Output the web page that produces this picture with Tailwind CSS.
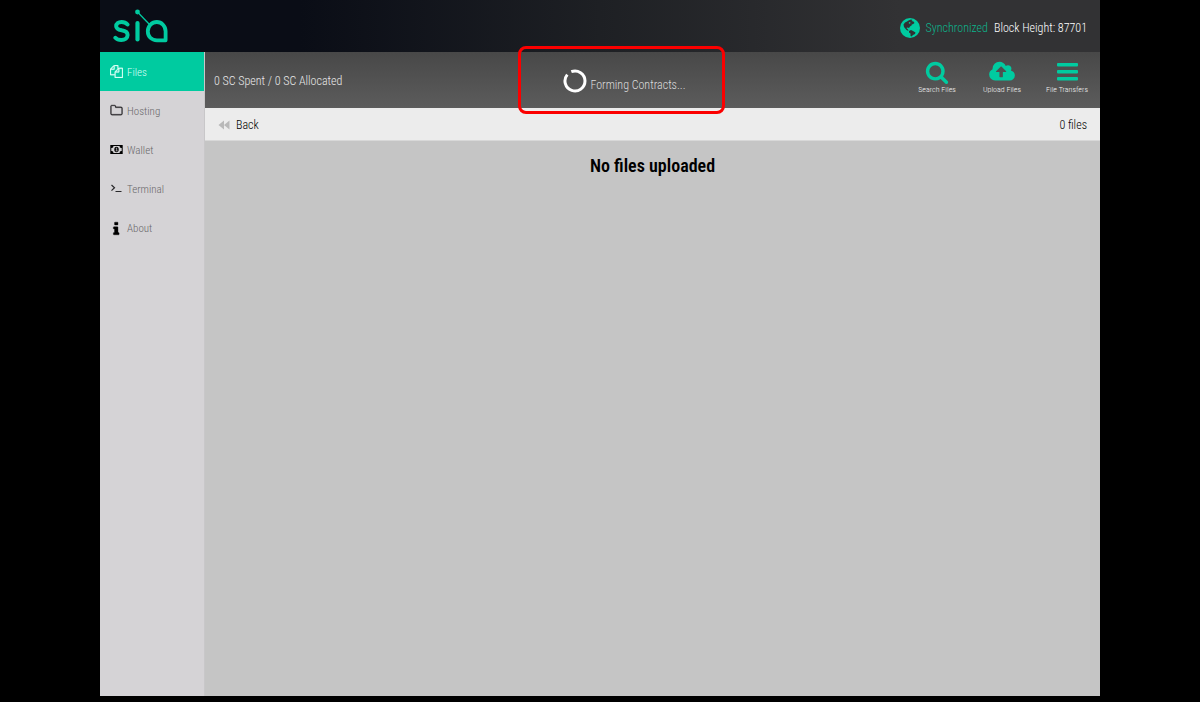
<!DOCTYPE html>
<html lang="en">
<head>
<meta charset="utf-8">
<meta name="viewport" content="width=device-width, initial-scale=1">
<title>Sia</title>
<script src="https://cdn.jsdelivr.net/npm/@tailwindcss/browser@4"></script>
</head>
<body class="flex min-h-screen flex-col bg-black px-[100px] pb-1.5 font-['Roboto_Condensed','Liberation_Sans_Narrow',Roboto,sans-serif] text-xs font-light">
<header class="flex h-[52px] items-center justify-between bg-linear-to-r from-[#0a0d16] from-20% via-[#1e2024] via-50% to-[#323234] to-80% px-[13px]">
  <svg class="mt-0.5 h-9 w-14" viewBox="0 0 56 36" fill="none" stroke="#00cba0" role="img" aria-label="Sia">
    <path d="M14.500 15.500C13 13.800 11 13 8.500 13C5.400 13 3.200 14.700 3.200 17.200C3.200 20 5.800 20.700 8.700 21.300C12 21.900 14.600 22.600 14.600 26C14.600 29 12 31 8.300 31C6 31 3.800 30.400 2.400 28.800" stroke-width="4" stroke-linecap="round"/>
    <path d="M24.500 14V30.500" stroke-width="4.200" stroke-linecap="round"/>
    <circle cx="24.500" cy="3" r="2.400" fill="#00cba0" stroke="none"/>
    <path d="M24.500 3L37 16" stroke-width="1.300"/>
    <path d="M52.600 31.300H44C38.500 31.300 34.800 27.500 34.800 22.300S39 13 43.800 13S52.600 17.200 52.600 22.300Z" stroke-width="3.800" stroke-linejoin="round"/>
  </svg>
  <div class="flex items-center gap-1.5 pt-[3px]">
    <svg class="size-5" viewBox="0 0 20 20" aria-hidden="true">
      <circle cx="10" cy="10" r="10" fill="#00cba0"/>
      <path fill="#303032" d="M8.500 2.500L11 1.500L12.500 2L11.500 3L13.500 3.500L14.500 5L12.500 6.500L11.500 5.500L12 7L10 8.500L9 10L7.500 9.500L6.500 10L8 11.500L8.500 13L6.500 12L4 9L3.500 6.500L5 4.500L7 3.500ZM9.500 4L8.500 5L10 6L10.500 4.500ZM9 13L11 12L13 13L15.500 14.500L15 16L13 17L11.500 18.500L10.500 18L10.500 15.500L9 14.500Z"/>
    </svg>
    <span class="text-[#0cb48c]">Synchronized</span>
    <span class="text-white">Block Height: 87701</span>
  </div>
</header>
<div class="flex grow">
  <nav class="w-[105px] shrink-0 border-r border-[#c8c7c9] bg-[#d5d3d6] text-[11px] text-[#6a686b]">
    <a href="#" aria-current="page" class="flex h-[39px] items-center gap-1 bg-[#00cba0] pl-2.5 text-[#d8fff6]">
      <svg class="size-[13px]" viewBox="0 0 1792 1792" fill="currentColor" stroke="currentColor" stroke-width="40" aria-hidden="true"><path d="M1696 384q40 0 68 28t28 68v1216q0 40-28 68t-68 28h-960q-40 0-68-28t-28-68v-288h-544q-40 0-68-28t-28-68v-672q0-40 20-88t48-76l408-408q28-28 76-48t88-20h416q40 0 68 28t28 68v328q68-40 128-40h416zm-544 213l-299 299h299v-299zm-640-384l-299 299h299v-299zm196 647l316-316v-416h-384v416q0 40-28 68t-68 28h-416v640h512v-256q0-40 20-88t48-76zm956 804v-1152h-384v416q0 40-28 68t-68 28h-416v640h896z"/></svg><span class="pt-[3px]">Files</span></a>
    <a href="#" class="flex h-[39px] items-center gap-1 pl-2.5">
      <svg class="size-[13px] text-[#29282b]" viewBox="0 0 1792 1792" fill="currentColor" stroke="currentColor" stroke-width="40" aria-hidden="true"><path d="M1600 1312v-704q0-40-28-68t-68-28h-704q-40 0-68-28t-28-68v-64q0-40-28-68t-68-28h-320q-40 0-68 28t-28 68v960q0 40 28 68t68 28h1216q40 0 68-28t28-68zm128-704v704q0 92-66 158t-158 66h-1216q-92 0-158-66t-66-158v-960q0-92 66-158t158-66h320q92 0 158 66t66 158v32h672q92 0 158 66t66 158z"/></svg><span class="pt-[3px]">Hosting</span></a>
    <a href="#" class="flex h-[39px] items-center gap-1 pl-2.5">
      <svg class="size-[13px] text-black" viewBox="0 0 13 13" aria-hidden="true"><path fill="currentColor" fill-rule="evenodd" d="M.3 2H12.700V11H.3ZM3.500 3A2 2 0 0 1 1.300 5V8A2 2 0 0 1 3.500 10H9.500A2 2 0 0 1 11.700 8V5A2 2 0 0 1 9.500 3Z"/><ellipse cx="6.500" cy="6.500" rx="2.200" ry="2.800"/><path d="M5.800 5.500L6.700 5V7.800M5.600 7.900H7.600" fill="none" stroke="#d5d3d6" stroke-width=".7"/></svg><span class="pt-[3px]">Wallet</span></a>
    <a href="#" class="flex h-[39px] items-center gap-1 pl-2.5">
      <svg class="size-[13px] text-[#29282b]" viewBox="0 0 13 13" fill="none" stroke="currentColor" aria-hidden="true"><path d="M1.500 3L4.500 5.800L1.500 8.600M5.500 9.500H11.500" stroke-width="1.200"/></svg><span class="pt-[3px]">Terminal</span></a>
    <a href="#" class="flex h-[39px] items-center gap-1 pl-2.5">
      <svg class="size-[13px] text-black" viewBox="200 0 1450 1450" fill="currentColor" stroke="currentColor" stroke-width="40" overflow="visible" aria-hidden="true"><path d="M1216 1344v128q0 26-19 45t-45 19h-512q-26 0-45-19t-19-45v-128q0-26 19-45t45-19h64v-384h-64q-26 0-45-19t-19-45v-128q0-26 19-45t45-19h384q26 0 45 19t19 45v576h64q26 0 45 19t19 45zm-128-1152v192q0 26-19 45t-45 19h-256q-26 0-45-19t-19-45v-192q0-26 19-45t45-19h256q26 0 45 19t19 45z"/></svg><span class="pt-[3px]">About</span></a>
  </nav>
  <main class="min-w-0 grow bg-[#c5c5c5]">
    <div class="relative grid h-14 grid-cols-[1fr_auto_1fr] items-center bg-linear-to-b from-[#484848] to-[#5c5c5c] px-2">
      <p class="pl-px pt-0.5 text-[#e8e8e8]">0 SC Spent / 0 SC Allocated</p>
      <div class="-ml-14 flex items-center gap-[3px] pt-0.5 text-[#dcdcdc]">
        <svg class="size-6" viewBox="0 0 24 24" fill="none" aria-hidden="true"><path d="M8.300 2.700A10 10 0 1 1 4.300 5.600" stroke="#fff" stroke-width="3"/></svg>
        <span class="pt-2">Forming Contracts...</span>
      </div>
      <div class="flex justify-end gap-[15px] pb-1 text-[8px] leading-3 text-[#f0f0f0]">
        <button type="button" class="flex w-[50px] flex-col items-center whitespace-nowrap">
          <svg class="size-6" viewBox="0 0 1792 1792" fill="#00cba0" aria-hidden="true"><path d="M1216 832q0-185-131.500-316.500t-316.500-131.500-316.500 131.500-131.500 316.500 131.500 316.500 316.500 131.500 316.500-131.500 131.500-316.500zm512 832q0 52-38 90t-90 38q-54 0-90-38l-343-342q-179 124-399 124-143 0-273.500-55.500t-225-150-150-225-55.500-273.500 55.500-273.500 150-225 225-150 273.500-55.500 273.500 55.500 225 150 150 225 55.500 273.500q0 220-124 399l343 343q37 37 37 90z"/></svg>Search Files</button>
        <button type="button" class="flex w-[50px] flex-col items-center whitespace-nowrap">
          <svg class="h-6 w-[26px]" viewBox="0 0 1920 1792" fill="#00cba0" aria-hidden="true"><path d="M1280 864q0-14-9-23l-352-352q-9-9-23-9t-23 9l-351 351q-10 12-10 24 0 14 9 23t23 9h224v352q0 13 9.500 22.500t22.500 9.500h192q13 0 22.500-9.500t9.500-22.500v-352h224q13 0 22.500-9.500t9.500-22.500zm640 288q0 159-112.500 271.500t-271.500 112.500h-1088q-185 0-316.500-131.500t-131.500-316.500q0-130 70-240t188-165q-2-30-2-43 0-212 150-362t362-150q156 0 285.500 87t188.500 231q71-62 166-62 106 0 181 75t75 181q0 76-41 138 130 31 213.500 135.500t83.500 238.500z"/></svg>Upload Files</button>
        <button type="button" class="flex w-[50px] flex-col items-center whitespace-nowrap">
          <svg class="h-6 w-[21px]" viewBox="0 0 21 24" fill="#00cba0" aria-hidden="true"><rect y="3" width="21" height="3.500" rx="1"/><rect y="10" width="21" height="3.500" rx="1"/><rect y="17" width="21" height="3.500" rx="1"/></svg>File Transfers</button>
      </div>
      <div class="absolute -top-1.5 left-1/2 h-[68px] w-[207px] -translate-x-[135px] rounded-lg border-3 border-[#fb0000]"></div>
    </div>
    <div class="flex h-[33px] items-center justify-between border-b border-[#d8d8d8] bg-[#ececec] px-[13px] pt-0.5 text-black">
      <button type="button" class="flex items-center gap-1.5"><svg class="h-2.5 w-3" viewBox="0 0 12 10" fill="#b9b9b9" aria-hidden="true"><path d="M6 .5V9.500L.5 5ZM11.500 .5V9.500L6 5Z"/></svg>Back</button>
      <span>0 files</span>
    </div>
    <h1 class="pt-3 text-center text-lg leading-[26px] font-semibold text-black">No files uploaded</h1>
  </main>
</div>
</body>
</html>
